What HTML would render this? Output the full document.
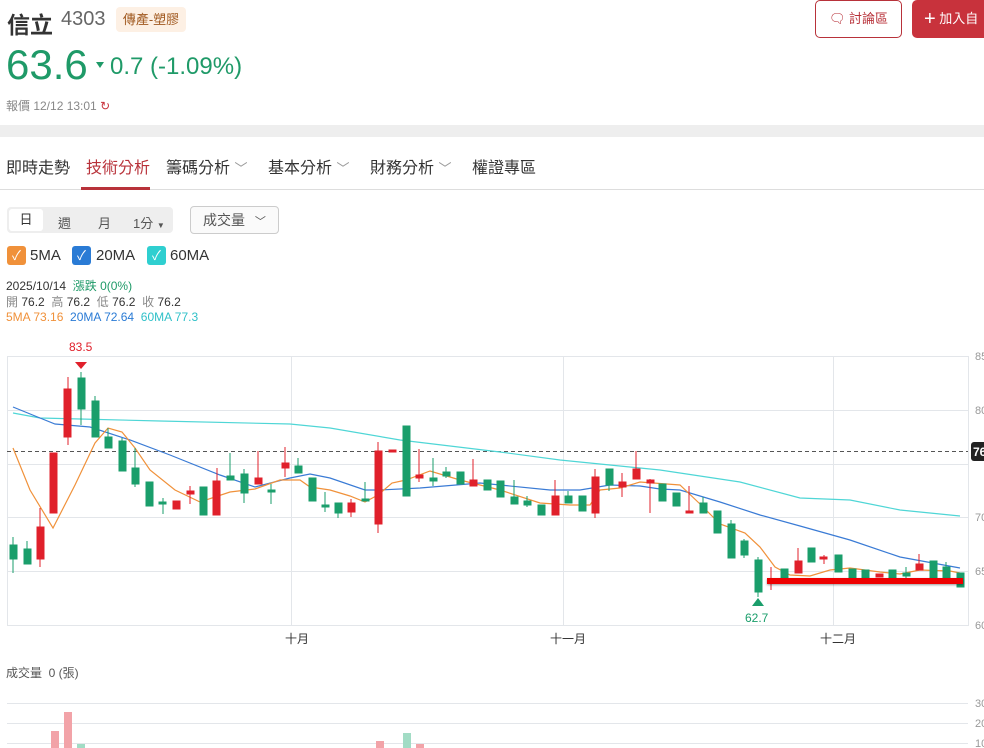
<!DOCTYPE html>
<html><head><meta charset="utf-8"><style>
*{margin:0;padding:0;box-sizing:border-box}
body{width:984px;height:748px;overflow:hidden;background:#fff;font-family:"Liberation Sans","Noto Sans CJK TC",sans-serif;color:#333;position:relative}
.a{position:absolute;white-space:nowrap}
</style></head><body>
<div class="a" style="left:7px;top:6px;font-size:23px;font-weight:bold;color:#333">信立</div>
<div class="a" style="left:61px;top:8px;font-size:20px;color:#666">4303</div>
<div class="a" style="left:116px;top:7px;height:25px;width:70px;background:#fdf0e4;border-radius:4px;font-size:13px;color:#a0581e;line-height:25px;text-align:center">傳產-塑膠</div>
<div class="a" style="left:6px;top:40px;font-size:42px;color:#1f9a68;line-height:50px">63.6</div>
<div class="a" style="left:96px;top:62px;width:0;height:0;border-left:4px solid transparent;border-right:4px solid transparent;border-top:6px solid #1f9a68"></div>
<div class="a" style="left:110px;top:52px;font-size:24px;color:#1f9a68;line-height:30px">0.7 (-1.09%)</div>
<div class="a" style="left:6px;top:97px;font-size:12px;color:#888">報價 12/12 13:01 <span style="color:#c8323c">↻</span></div>
<div class="a" style="left:815px;top:0;width:87px;height:38px;border:1px solid #b8323a;border-radius:5px;font-size:13px;color:#b8323a;line-height:36px;text-align:center">🗨 討論區</div>
<div class="a" style="left:912px;top:0;width:80px;height:38px;background:#c8323c;border-radius:5px;font-size:13px;color:#fff;line-height:38px;padding-left:12px"><span style="font-size:20px;vertical-align:-2px">+</span> 加入自</div>
<div class="a" style="left:0;top:125px;width:984px;height:12px;background:#eee"></div>
<div class="a" style="left:6px;top:154px;font-size:16px;color:#333;word-spacing:0">即時走勢</div>
<div class="a" style="left:86px;top:154px;font-size:16px;color:#b8323a">技術分析</div>
<div class="a" style="left:166px;top:154px;font-size:16px;color:#333">籌碼分析 <span style="color:#999;font-size:13px">﹀</span></div>
<div class="a" style="left:268px;top:154px;font-size:16px;color:#333">基本分析 <span style="color:#999;font-size:13px">﹀</span></div>
<div class="a" style="left:370px;top:154px;font-size:16px;color:#333">財務分析 <span style="color:#999;font-size:13px">﹀</span></div>
<div class="a" style="left:472px;top:154px;font-size:16px;color:#333">權證專區</div>
<div class="a" style="left:0;top:189px;width:984px;height:1px;background:#ddd"></div>
<div class="a" style="left:81px;top:187px;width:69px;height:3px;background:#b8323a"></div>
<div class="a" style="left:7px;top:207px;width:166px;height:26px;background:#eee;border-radius:4px"></div>
<div class="a" style="left:9px;top:209px;width:34px;height:22px;background:#fff;border-radius:3px;font-size:13px;text-align:center;line-height:22px">日</div>
<div class="a" style="left:58px;top:213px;font-size:13px;color:#555">週</div>
<div class="a" style="left:98px;top:213px;font-size:13px;color:#555">月</div>
<div class="a" style="left:133px;top:213px;font-size:13px;color:#555">1分 <span style="font-size:8px">▼</span></div>
<div class="a" style="left:190px;top:206px;width:89px;height:28px;border:1px solid #ccc;border-radius:4px;background:#fafafa;font-size:14px;color:#555;line-height:26px;padding-left:12px">成交量 <span style="font-size:11px;margin-left:6px">﹀</span></div>
<div class="a" style="left:7px;top:246px;width:19px;height:19px;background:#f0913a;border-radius:3px;color:#fff;font-size:13px;text-align:center;line-height:19px">✓</div>
<div class="a" style="left:30px;top:247px;font-size:15px">5MA</div>
<div class="a" style="left:72px;top:246px;width:19px;height:19px;background:#2a7bd5;border-radius:3px;color:#fff;font-size:13px;text-align:center;line-height:19px">✓</div>
<div class="a" style="left:96px;top:247px;font-size:15px">20MA</div>
<div class="a" style="left:147px;top:246px;width:19px;height:19px;background:#2fcfd0;border-radius:3px;color:#fff;font-size:13px;text-align:center;line-height:19px">✓</div>
<div class="a" style="left:170px;top:247px;font-size:15px">60MA</div>
<div class="a" style="left:6px;top:279px;font-size:12px;line-height:15.5px">2025/10/14 &nbsp;<span style="color:#1f9a68">漲跌 0(0%)</span><br><span style="color:#888">開</span> 76.2 &nbsp;<span style="color:#888">高</span> 76.2 &nbsp;<span style="color:#888">低</span> 76.2 &nbsp;<span style="color:#888">收</span> 76.2<br><span style="color:#f0913a">5MA 73.16</span> &nbsp;<span style="color:#2a7bd5">20MA 72.64</span> &nbsp;<span style="color:#2fc0c8">60MA 77.3</span></div>
<svg class="a" style="left:0;top:0" width="984" height="748" font-family="Liberation Sans" font-size="11">
<g stroke="#e3e6ea" stroke-width="1">
<line x1="7" y1="356.5" x2="968" y2="356.5"/><line x1="7" y1="410.5" x2="968" y2="410.5"/><line x1="7" y1="464.5" x2="968" y2="464.5"/><line x1="7" y1="517.5" x2="968" y2="517.5"/><line x1="7" y1="571.5" x2="968" y2="571.5"/><line x1="7" y1="625.5" x2="968" y2="625.5"/>
<line x1="7.5" y1="356" x2="7.5" y2="626"/><line x1="968.5" y1="356" x2="968.5" y2="626"/>
<line x1="291.5" y1="356" x2="291.5" y2="626"/><line x1="563.5" y1="356" x2="563.5" y2="626"/><line x1="833.5" y1="356" x2="833.5" y2="626"/>
<line x1="7" y1="703.5" x2="968" y2="703.5"/><line x1="7" y1="723.5" x2="968" y2="723.5"/><line x1="7" y1="743.5" x2="968" y2="743.5"/>
</g>
<g fill="#999"><text x="975" y="360">85</text><text x="975" y="414">80</text><text x="975" y="521">70</text><text x="975" y="575">65</text><text x="975" y="629">60</text>
<text x="975" y="707">30</text><text x="975" y="727">20</text><text x="975" y="747">10</text></g>
<g fill="#333" font-size="12"><text x="285" y="643">十月</text><text x="550" y="643">十一月</text><text x="820" y="643">十二月</text></g>
<text x="6" y="677" font-size="12" fill="#555">成交量 &nbsp;0 (張)</text>
<line x1="7" y1="451.5" x2="968" y2="451.5" stroke="#555" stroke-dasharray="4,3"/>
<rect x="971" y="442" width="16" height="19" rx="3" fill="#222"/><text x="973" y="456" fill="#fff" font-weight="bold" font-size="12">76</text>
<polyline fill="none" stroke="#4fd6d6" stroke-width="1.2" points="13,413 40,418 80,419 160,421 290,424 330,428 400,440 500,452 560,460 660,470 740,482 800,498 850,500 900,510 960,516"/>
<polyline fill="none" stroke="#3a7bd5" stroke-width="1.2" points="13,407 40,418 55,424 90,427 130,440 170,455 220,475 255,487 290,478 310,474 330,478 365,490 380,490 420,488 480,483 550,490 580,490 610,485 640,486 660,489 680,490 720,502 760,515 800,526 850,540 900,557 960,568"/>
<polyline fill="none" stroke="#f0913a" stroke-width="1.2" points="13,448 30,490 53,528 75,485 95,443 108,428 122,432 135,448 150,470 175,490 200,502 230,492 255,489 280,480 300,480 310,487 330,490 350,496 365,502 378,495 392,483 406,480 430,471 460,480 500,490 540,503 570,505 590,505 600,490 620,488 640,482 680,485 700,504 720,524 745,533 760,547 775,567 790,575 810,576 830,570 850,568 880,572 900,574 920,570 950,571 960,573"/>
<g id="c" stroke-width="1">
<g fill="#1a9e6b" stroke="#1a9e6b">
<line x1="13" y1="537" x2="13" y2="573"/><rect x="10" y="545" width="7" height="14"/>
<line x1="27" y1="541" x2="27" y2="564"/><rect x="24" y="549" width="7" height="15"/>
<line x1="81" y1="372" x2="81" y2="425"/><rect x="78" y="378" width="7" height="31"/>
<line x1="95" y1="396" x2="95" y2="437"/><rect x="92" y="401" width="7" height="36"/>
<line x1="108" y1="428" x2="108" y2="448"/><rect x="105" y="437" width="7" height="11"/>
<line x1="122" y1="438" x2="122" y2="471"/><rect x="119" y="441" width="7" height="30"/>
<line x1="135" y1="448" x2="135" y2="487"/><rect x="132" y="468" width="7" height="16"/>
<rect x="146" y="482" width="7" height="24"/>
<line x1="163" y1="498" x2="163" y2="514"/><rect x="159" y="502" width="7" height="2"/>
<rect x="200" y="487" width="7" height="28"/>
<line x1="230" y1="453" x2="230" y2="480"/><rect x="227" y="476" width="7" height="4"/>
<line x1="244" y1="469" x2="244" y2="503"/><rect x="241" y="474" width="7" height="19"/>
<line x1="271" y1="484" x2="271" y2="504"/><rect x="268" y="490" width="7" height="2"/>
<line x1="298" y1="458" x2="298" y2="473"/><rect x="295" y="466" width="7" height="7"/>
<rect x="309" y="478" width="7" height="23"/>
<line x1="325" y1="492" x2="325" y2="512"/><rect x="322" y="505" width="7" height="2"/>
<line x1="338" y1="503" x2="338" y2="518"/><rect x="335" y="503" width="7" height="10"/>
<line x1="365" y1="482" x2="365" y2="501"/><rect x="362" y="499" width="7" height="2"/>
<rect x="403" y="426" width="7" height="70"/>
<line x1="433" y1="458" x2="433" y2="486"/><rect x="430" y="478" width="7" height="3"/>
<line x1="446" y1="467" x2="446" y2="478"/><rect x="443" y="472" width="7" height="4"/>
<rect x="457" y="472" width="7" height="12"/>
<rect x="484" y="480" width="7" height="10"/>
<rect x="497" y="481" width="7" height="16"/>
<line x1="514" y1="480" x2="514" y2="504"/><rect x="511" y="497" width="7" height="7"/>
<line x1="527" y1="496" x2="527" y2="507"/><rect x="524" y="501" width="7" height="4"/>
<rect x="538" y="505" width="7" height="10"/>
<line x1="568" y1="491" x2="568" y2="503"/><rect x="565" y="496" width="7" height="7"/>
<rect x="579" y="496" width="7" height="15"/>
<line x1="609" y1="469" x2="609" y2="491"/><rect x="606" y="469" width="7" height="16"/>
<rect x="659" y="484" width="7" height="17"/>
<rect x="673" y="493" width="7" height="13"/>
<line x1="703" y1="497" x2="703" y2="513"/><rect x="700" y="503" width="7" height="10"/>
<rect x="714" y="511" width="7" height="22"/>
<line x1="731" y1="520" x2="731" y2="558"/><rect x="728" y="524" width="7" height="34"/>
<line x1="744" y1="539" x2="744" y2="558"/><rect x="741" y="541" width="7" height="14"/>
<line x1="758" y1="557" x2="758" y2="597"/><rect x="755" y="560" width="7" height="32"/>
<rect x="781" y="569" width="7" height="10"/>
<rect x="808" y="548" width="7" height="14"/>
<rect x="835" y="555" width="7" height="17"/>
<rect x="849" y="569" width="7" height="10"/>
<rect x="889" y="570" width="7" height="10"/>
<line x1="906" y1="567" x2="906" y2="580"/><rect x="903" y="573" width="7" height="3"/>
<rect x="930" y="561" width="7" height="17"/>
<line x1="946" y1="562" x2="946" y2="578"/><rect x="943" y="567" width="7" height="11"/>
<rect x="957" y="573" width="7" height="14"/>
<rect x="862" y="570" width="7" height="9"/>
</g>
<g fill="#e0202b" stroke="#e0202b">
<line x1="40" y1="508" x2="40" y2="567"/><rect x="37" y="527" width="7" height="32"/>
<rect x="50" y="453" width="7" height="60"/>
<line x1="68" y1="377" x2="68" y2="445"/><rect x="64" y="389" width="7" height="48"/>
<rect x="173" y="501" width="7" height="8"/>
<line x1="190" y1="486" x2="190" y2="504"/><rect x="187" y="491" width="7" height="3"/>
<line x1="217" y1="468" x2="217" y2="515"/><rect x="213" y="481" width="7" height="34"/>
<line x1="258" y1="451" x2="258" y2="484"/><rect x="255" y="478" width="7" height="6"/>
<line x1="285" y1="447" x2="285" y2="477"/><rect x="282" y="463" width="7" height="5"/>
<line x1="351" y1="499" x2="351" y2="517"/><rect x="348" y="503" width="7" height="9"/>
<line x1="378" y1="442" x2="378" y2="533"/><rect x="375" y="451" width="7" height="73"/>
<rect x="389" y="450" width="7" height="2"/>
<line x1="419" y1="449" x2="419" y2="482"/><rect x="416" y="475" width="7" height="3"/>
<line x1="473" y1="459" x2="473" y2="486"/><rect x="470" y="480" width="7" height="6"/>
<line x1="555" y1="480" x2="555" y2="515"/><rect x="552" y="496" width="7" height="19"/>
<line x1="595" y1="469" x2="595" y2="518"/><rect x="592" y="477" width="7" height="36"/>
<line x1="622" y1="473" x2="622" y2="497"/><rect x="619" y="482" width="7" height="5"/>
<line x1="636" y1="451" x2="636" y2="479"/><rect x="633" y="469" width="7" height="10"/>
<line x1="650" y1="479" x2="650" y2="513"/><rect x="647" y="480" width="7" height="3"/>
<line x1="689" y1="486" x2="689" y2="512"/><rect x="686" y="511" width="7" height="2"/>
<line x1="771" y1="567" x2="771" y2="590"/><rect x="768" y="579" width="7" height="2"/>
<line x1="798" y1="548" x2="798" y2="573"/><rect x="795" y="561" width="7" height="12"/>
<line x1="824" y1="555" x2="824" y2="564"/><rect x="820" y="557" width="7" height="2"/>
<rect x="876" y="574" width="7" height="3"/>
<line x1="919" y1="554" x2="919" y2="570"/><rect x="916" y="564" width="7" height="6"/>
</g>
</g>
<rect x="767" y="578" width="196" height="6" fill="#ee0000" style="filter:drop-shadow(0 1px 1px rgba(0,0,0,.4))"/>
<path d="M75,362 L87,362 L81,369 Z" fill="#e0202b"/><text x="69" y="351" fill="#e0202b" font-size="12">83.5</text>
<path d="M752,606 L764,606 L758,598 Z" fill="#1a9e6b"/><text x="745" y="622" fill="#1a9e6b" font-size="12">62.7</text>
<g>
<rect x="51" y="731" width="8" height="17" fill="#f2a3a8"/><rect x="64" y="712" width="8" height="36" fill="#f2a3a8"/><rect x="77" y="744" width="8" height="4" fill="#a2dcc5"/>
<rect x="376" y="741" width="8" height="7" fill="#f2a3a8"/><rect x="403" y="733" width="8" height="15" fill="#a2dcc5"/><rect x="416" y="744" width="8" height="4" fill="#f2a3a8"/>
</g>
</svg>
</body></html>
